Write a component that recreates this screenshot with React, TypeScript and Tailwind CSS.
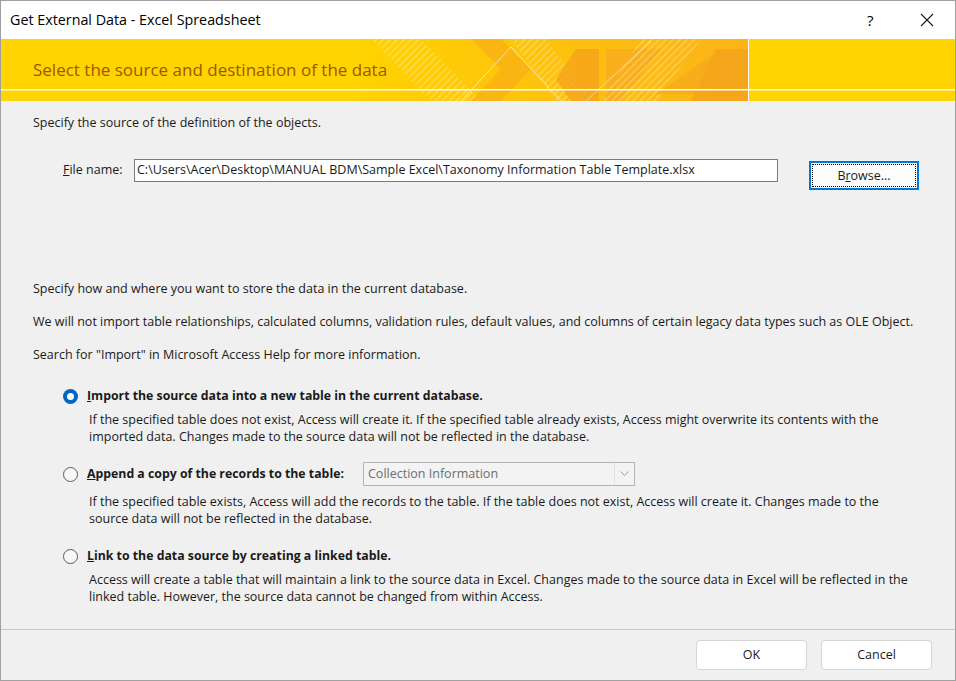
import React from 'react';

const font = { fontFamily: '"Segoe UI", "Open Sans", "Noto Sans", sans-serif' };

function Radio({ checked }: { checked?: boolean }) {
  if (checked) {
    return (
      <span className="w-[15px] h-[15px] rounded-full bg-[#0067c0] flex items-center justify-center shrink-0">
        <span className="w-[7px] h-[7px] rounded-full bg-white" />
      </span>
    );
  }
  return <span className="w-[15px] h-[15px] rounded-full border border-[#5b5b5b] bg-[#f7f7f7] shrink-0" />;
}

function BannerArt() {
  // decorative stripes and arrow shapes on the yellow header
  return (
    <svg className="absolute inset-0" width="956" height="62" viewBox="0 0 956 62">
      <defs>
        <pattern id="stripes" width="5" height="5" patternUnits="userSpaceOnUse" patternTransform="rotate(45)">
          <rect width="1.2" height="5" fill="#fff" opacity="0.35" />
        </pattern>
        <linearGradient id="fade" x1="0" x2="1">
          <stop offset="0" stopColor="#ffd200" />
          <stop offset="0.55" stopColor="#fdc010" />
          <stop offset="1" stopColor="#fbb417" />
        </linearGradient>
      </defs>
      <rect x="0" y="0" width="956" height="62" fill="#ffd400" />
      <rect x="360" y="0" width="387" height="62" fill="url(#fade)" />
      <polygon points="370,0 420,0 480,62 430,62" fill="url(#stripes)" />
      <polygon points="510,0 545,0 590,62 555,62" fill="url(#stripes)" />
      <polygon points="470,0 500,0 530,30 500,62 470,62 500,30" fill="#f8a81a" opacity="0.55" />
      <polygon points="575,10 598,10 598,70 575,70 555,40" fill="#f5a31a" opacity="0.8" />
      <polygon points="605,10 660,10 620,62 605,62" fill="#f6a91d" opacity="0.7" />
      <polygon points="640,0 700,0 655,62 600,62" fill="url(#stripes)" />
      <polygon points="715,10 747,10 747,62 690,62" fill="#f4a01a" opacity="0.7" />
      <polygon points="655,55 720,10 747,10 747,55" fill="#f5a51c" opacity="0.6" />
      <line x1="510" y1="8" x2="560" y2="62" stroke="#fff" strokeOpacity="0.6" strokeWidth="1" />
      <line x1="460" y1="62" x2="510" y2="8" stroke="#fff" strokeOpacity="0.6" strokeWidth="1" />
      <line x1="585" y1="62" x2="650" y2="2" stroke="#fff" strokeOpacity="0.5" strokeWidth="1" />
      <rect x="747" y="0" width="1" height="62" fill="#fff" />
      <rect x="0" y="50" width="956" height="1.5" fill="#fff" />
    </svg>
  );
}

export default function App() {
  return (
    <div style={font} className="w-[956px] h-[681px] bg-[#f0f0f0] border border-[#a0a0a0] flex flex-col text-[12.5px] text-[#1a1a1a] overflow-hidden">
      {/* title bar */}
      <div className="h-[38px] bg-white flex items-center pl-[9px] shrink-0">
        <span className="text-[14.3px] text-black flex-1">Get External Data - Excel Spreadsheet</span>
        <span className="text-[15px] text-black w-[53px]">?</span>
        <svg width="14" height="14" viewBox="0 0 14 14" className="mr-[21px]">
          <path d="M1 1 L13 13 M13 1 L1 13" stroke="#222" strokeWidth="1.2" />
        </svg>
      </div>

      {/* banner */}
      <div className="relative h-[62px] shrink-0">
        <BannerArt />
        <div className="relative pl-[32px] pt-[18px] text-[17px] text-[#a05600]">
          Select the source and destination of the data
        </div>
      </div>

      {/* content */}
      <div className="flex-1 flex flex-col pl-[32px] pr-[36px]">
        <p className="mt-[14px] leading-[16px]">Specify the source of the definition of the objects.</p>

        <div className="flex items-start mt-[26px] pl-[30px]">
          <span className="w-[71px] mt-[4px]"><span className="underline">F</span>ile name:</span>
          <div className="mt-[2px] w-[644px] h-[23px] bg-white border border-[#7a7a7a] flex items-center px-[2px]">
            C:\Users\Acer\Desktop\MANUAL BDM\Sample Excel\Taxonomy Information Table Template.xlsx
          </div>
          <div className="ml-[31px] mt-[4px] w-[110px] h-[29px] border-2 border-[#0078d7] bg-[#fdfdfd] p-[1px]">
            <div className="w-full h-full border border-dotted border-black flex items-center justify-center pt-[2px]">
              B<span className="underline">r</span>owse...
            </div>
          </div>
        </div>

        <p className="mt-[91px] leading-[16px]">Specify how and where you want to store the data in the current database.</p>
        <p className="mt-[17px] leading-[16px]">
          We will not import table relationships, calculated columns, validation rules, default values, and columns of certain legacy data types such as OLE Object.
        </p>
        <p className="mt-[17px] leading-[16px]">Search for "Import" in Microsoft Access Help for more information.</p>

        <div className="mt-[24px] pl-[30px] flex flex-col">
          <div className="flex items-center gap-[9px] h-[18px]">
            <Radio checked />
            <span className="font-bold text-[12.3px]"><span className="underline">I</span>mport the source data into a new table in the current database.</span>
          </div>
          <div className="pl-[26px] mt-[6px] leading-[17px] w-[851px]">
            If the specified table does not exist, Access will create it. If the specified table already exists, Access might overwrite its contents with the imported data. Changes made to the source data will not be reflected in the database.
          </div>

          <div className="flex items-center gap-[9px] mt-[17px] h-[24px]">
            <Radio />
            <span className="font-bold text-[12.3px] w-[267px]"><span className="underline">A</span>ppend a copy of the records to the table:</span>
            <div className="w-[272px] h-[24px] border border-[#b4b4b4] bg-[#f3f3f3] flex items-center text-[#6d6d6d]">
              <span className="flex-1 pl-[4px]">Collection Information</span>
              <span className="w-[20px] h-full border-l border-[#e2e2e2] flex items-center justify-center">
                <svg width="9" height="6" viewBox="0 0 9 6">
                  <path d="M0.5 0.5 L4.5 4.5 L8.5 0.5" fill="none" stroke="#a0a0a0" strokeWidth="1" />
                </svg>
              </span>
            </div>
          </div>
          <div className="pl-[26px] mt-[7px] leading-[17px] w-[851px]">
            If the specified table exists, Access will add the records to the table. If the table does not exist, Access will create it. Changes made to the source data will not be reflected in the database.
          </div>

          <div className="flex items-center gap-[9px] mt-[20px] h-[18px]">
            <Radio />
            <span className="font-bold text-[12.3px]"><span className="underline">L</span>ink to the data source by creating a linked table.</span>
          </div>
          <div className="pl-[26px] mt-[6px] leading-[17px] w-[851px]">
            Access will create a table that will maintain a link to the source data in Excel. Changes made to the source data in Excel will be reflected in the linked table. However, the source data cannot be changed from within Access.
          </div>
        </div>
      </div>

      {/* footer */}
      <div className="h-[51px] border-t border-[#c8c8c8] flex items-start justify-end gap-[14px] pr-[23px] pt-[10px] shrink-0">
        <button className="w-[111px] h-[30px] bg-white border border-[#d5d5d5] rounded-[4px] text-[12.5px]">OK</button>
        <button className="w-[111px] h-[30px] bg-white border border-[#d5d5d5] rounded-[4px] text-[12.5px]">Cancel</button>
      </div>
    </div>
  );
}
